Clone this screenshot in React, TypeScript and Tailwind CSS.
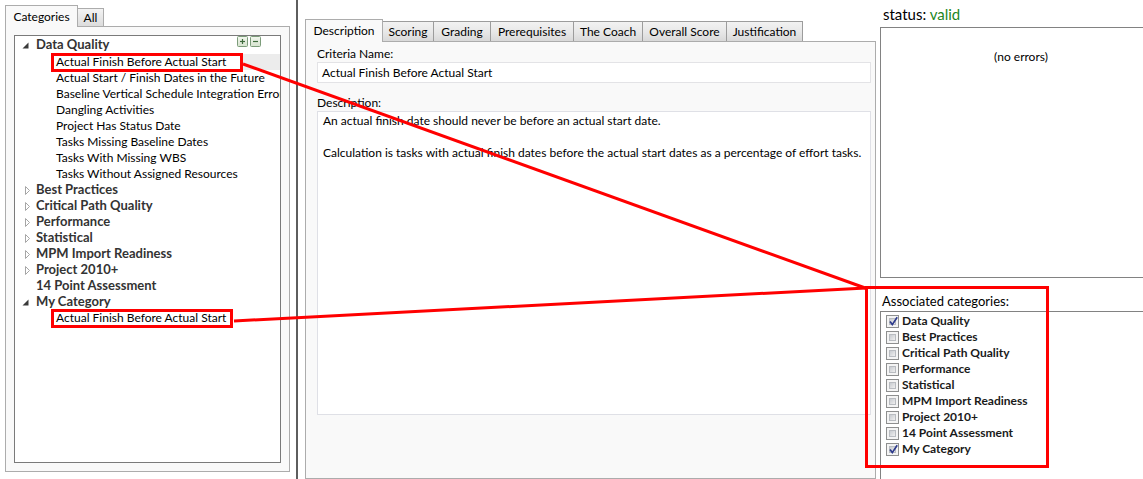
import React from 'react'

const dataQualityItems = [
  'Actual Finish Before Actual Start',
  'Actual Start / Finish Dates in the Future',
  'Baseline Vertical Schedule Integration Errors',
  'Dangling Activities',
  'Project Has Status Date',
  'Tasks Missing Baseline Dates',
  'Tasks With Missing WBS',
  'Tasks Without Assigned Resources',
]

const collapsedCategories = [
  'Best Practices',
  'Critical Path Quality',
  'Performance',
  'Statistical',
  'MPM Import Readiness',
  'Project 2010+',
]

const associated = [
  { name: 'Data Quality', checked: true },
  { name: 'Best Practices', checked: false },
  { name: 'Critical Path Quality', checked: false },
  { name: 'Performance', checked: false },
  { name: 'Statistical', checked: false },
  { name: 'MPM Import Readiness', checked: false },
  { name: 'Project 2010+', checked: false },
  { name: '14 Point Assessment', checked: false },
  { name: 'My Category', checked: true },
]

const tabs = [
  { label: 'Scoring', w: 'w-[51px]' },
  { label: 'Grading', w: 'w-[57px]' },
  { label: 'Prerequisites', w: 'w-[83px]' },
  { label: 'The Coach', w: 'w-[69px]' },
  { label: 'Overall Score', w: 'w-[84px]' },
  { label: 'Justification', w: 'w-[76px]' },
]

function ExpandedArrow() {
  return (
    <svg width="7" height="7" viewBox="0 0 7 7">
      <polygon points="6.5,0.5 6.5,6.5 0.5,6.5" fill="#3a3a3a" />
    </svg>
  )
}

function CollapsedArrow() {
  return (
    <svg width="6" height="9" viewBox="0 0 6 9">
      <polygon points="0.5,0.5 4.5,4.5 0.5,8.5" fill="white" stroke="#a6a6a6" strokeWidth="1" />
    </svg>
  )
}

function TreeButton({ minus }: { minus?: boolean }) {
  return (
    <svg width="11" height="11" viewBox="0 0 11 11">
      <defs>
        <linearGradient id={minus ? 'gm' : 'gp'} x1="0" y1="0" x2="0" y2="1">
          <stop offset="0" stopColor="#f2f7ee" />
          <stop offset="1" stopColor="#d6e3cf" />
        </linearGradient>
      </defs>
      <rect x="0.5" y="0.5" width="10" height="10" rx="1" fill={`url(#${minus ? 'gm' : 'gp'})`} stroke="#7c9c7a" />
      <path d="M3 5.5 H8" stroke="#3f6b3d" strokeWidth="1.2" />
      {!minus && <path d="M5.5 3 V8" stroke="#3f6b3d" strokeWidth="1.2" />}
    </svg>
  )
}

function CheckBox({ checked }: { checked: boolean }) {
  return (
    <span className="relative flex h-[13px] w-[13px] shrink-0 border border-[#8e8f8f] bg-[#f4f4f4] p-[2px]">
      <span className="h-full w-full border border-[#b9bcc1] bg-gradient-to-br from-[#c8cbd0] to-[#efefef]" />
      {checked && (
        <svg className="absolute left-[1px] top-[0px]" width="11" height="11" viewBox="0 0 11 11">
          <path d="M2 5.5 L4.3 8.6 L9.2 1.2" fill="none" stroke="#2d3a8c" strokeWidth="1.7" />
        </svg>
      )}
    </span>
  )
}

function CategoryRow({ label, arrow }: { label: string; arrow?: 'open' | 'closed' }) {
  return (
    <div className="flex h-[16px] items-center whitespace-nowrap">
      <span className="flex w-[21px] items-center pl-[7px]">
        {arrow === 'open' && <ExpandedArrow />}
        {arrow === 'closed' && (
          <span className="pl-[3px]">
            <CollapsedArrow />
          </span>
        )}
      </span>
      <span className="text-[13px] font-bold text-[#333333]">{label}</span>
    </div>
  )
}

function ChildRow({ label, selected }: { label: string; selected?: boolean }) {
  if (selected) {
    return (
      <div className="flex h-[16px] items-center whitespace-nowrap pl-[36px]">
        <span className="w-[192px] shrink-0 pl-[5px]">{label}</span>
        <span className="h-full flex-1 bg-[#ececec]" />
      </div>
    )
  }
  return <div className="flex h-[16px] items-center whitespace-nowrap pl-[41px]">{label}</div>
}

export default function App() {
  return (
    <div className="relative flex h-[479px] w-[1143px] overflow-hidden bg-white font-['Lato','Liberation_Sans',sans-serif] text-[12px] text-black">
      {/* Left: category tree */}
      <div className="flex w-[290px] shrink-0 flex-col pb-[7px] pl-[5px] pt-[5px]">
        <div className="flex h-[21px] items-end">
          <div className="relative z-10 -mb-px flex h-[22px] w-[73px] items-center justify-center border border-b-0 border-[#acacac] bg-[#f9f9f9]">
            Categories
          </div>
          <div className="flex h-[18px] w-[26px] items-center justify-center border border-b-0 border-l-0 border-[#acacac] bg-gradient-to-b from-[#f3f3f3] to-[#dcdcdc]">
            All
          </div>
        </div>
        <div className="flex-1 border border-[#acacac] bg-[#f9f9f9] p-[8px]">
          <div className="h-full overflow-hidden border border-[#7a7a7a] bg-white pt-[1px]">
            <div className="flex h-[17px] items-start justify-between pr-[19px]">
              <CategoryRow label="Data Quality" arrow="open" />
              <div className="-mt-px flex gap-[2px]">
                <TreeButton />
                <TreeButton minus />
              </div>
            </div>
            {dataQualityItems.map((item, i) => (
              <ChildRow key={item} label={item} selected={i === 0} />
            ))}
            {collapsedCategories.map((c) => (
              <CategoryRow key={c} label={c} arrow="closed" />
            ))}
            <CategoryRow label="14 Point Assessment" />
            <CategoryRow label="My Category" arrow="open" />
            <ChildRow label="Actual Finish Before Actual Start" />
          </div>
        </div>
      </div>

      {/* Splitter */}
      <div className="ml-[6px] w-[2px] shrink-0 bg-[#5e5e5e]" />

      {/* Middle: criteria tabs */}
      <div className="ml-[7px] flex w-[571px] shrink-0 flex-col pt-[19px]">
        <div className="flex h-[22px] items-end">
          <div className="relative z-10 -mb-px flex h-[23px] w-[78px] items-center justify-center border border-b-0 border-[#acacac] bg-[#f9f9f9]">
            Description
          </div>
          {tabs.map((t) => (
            <div
              key={t.label}
              className={`flex h-[20px] ${t.w} items-center justify-center border-r border-t border-[#9c9c9c] bg-gradient-to-b from-[#f2f2f2] via-[#e8e8e8] to-[#d9d9d9]`}
            >
              {t.label}
            </div>
          ))}
        </div>
        <div className="flex-1 border border-[#acacac] bg-[#f9f9f9] pl-[11px] pr-[4px] pt-[4px]">
          <div className="leading-[16px]">Criteria Name:</div>
          <div className="flex h-[21px] items-center border border-[#e3e3e6] bg-white pl-[4px]">
            Actual Finish Before Actual Start
          </div>
          <div className="mt-[12px] leading-[16px]">Description:</div>
          <div className="h-[304px] border border-[#dfe0e6] bg-white pl-[5px] pt-[1px] leading-[16px]">
            <div>An actual finish date should never be before an actual start date.</div>
            <div className="h-[16px]" />
            <div>Calculation is tasks with actual finish dates before the actual start dates as a percentage of effort tasks.</div>
          </div>
        </div>
      </div>

      {/* Right: status and associated categories */}
      <div className="flex flex-1 flex-col pl-[4px] pt-[5px]">
        <div className="pl-[3px] text-[15px] leading-[19px]">
          status: <span className="text-[#1d861d]">valid</span>
        </div>
        <div className="mt-[3px] h-[251px] w-[281px] shrink-0 border border-r-0 border-[#828282] pt-[21px] text-center leading-[16px]">
          (no errors)
        </div>
        <div className="mt-[14px] pl-[2px] text-[13px] leading-[18px]">Associated categories:</div>
        <div className="mt-px flex-1 border-l border-t border-[#828282] pl-[5px] pt-[1px]">
          {associated.map((a) => (
            <div key={a.name} className="flex h-[16px] items-center gap-[3px] whitespace-nowrap font-bold text-[#1a1a1a]">
              <CheckBox checked={a.checked} />
              <span>{a.name}</span>
            </div>
          ))}
        </div>
      </div>

      {/* Red annotations */}
      <svg className="pointer-events-none absolute left-0 top-0" width="1143" height="479" viewBox="0 0 1143 479">
        <g fill="none" stroke="#ff0000" strokeWidth="3">
          <rect x="52.5" y="54.5" width="189" height="16" />
          <rect x="52.5" y="310.5" width="179" height="16" />
          <rect x="866.5" y="287.5" width="181" height="179" />
          <line x1="243" y1="64" x2="868" y2="289" />
          <line x1="234" y1="321" x2="866" y2="288" />
        </g>
      </svg>
    </div>
  )
}
